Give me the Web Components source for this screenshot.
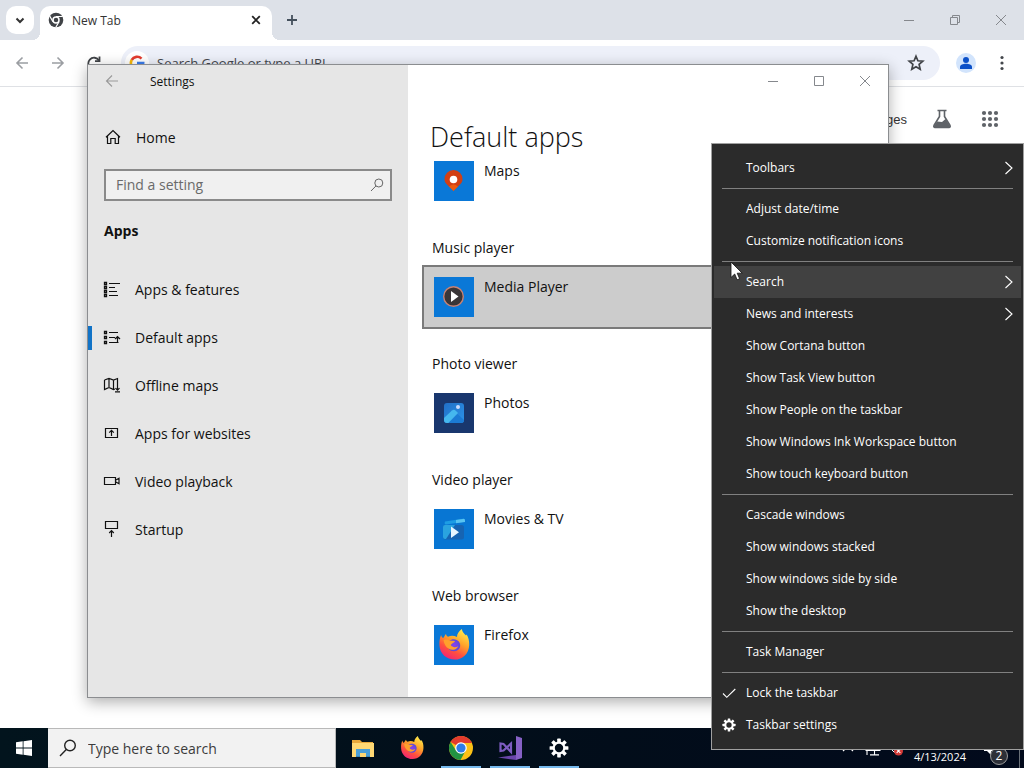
<!DOCTYPE html>
<html lang="en">
<head>
<meta charset="utf-8">
<title>Desktop</title>
<style>
html, body { margin: 0; height: 100%; }
body { font-family: "Open Sans", "Noto Sans", sans-serif; font-size: 14px; color: #111; overflow: hidden; }
</style>
</head>
<body>
<desk-top>
  <browser-window slot="window"></browser-window>
  <settings-window slot="floating" heading="Default apps">
    <settings-link slot="nav" icon="features" label="Apps &amp; features"></settings-link>
    <settings-link slot="nav" icon="defaults" label="Default apps" current></settings-link>
    <settings-link slot="nav" icon="maps" label="Offline maps"></settings-link>
    <settings-link slot="nav" icon="websites" label="Apps for websites"></settings-link>
    <settings-link slot="nav" icon="video" label="Video playback"></settings-link>
    <settings-link slot="nav" icon="startup" label="Startup"></settings-link>
    <default-app icon="tileMaps" name="Maps"></default-app>
    <default-app icon="tileMedia" name="Media Player" kind="Music player" active></default-app>
    <default-app icon="tilePhotos" name="Photos" kind="Photo viewer"></default-app>
    <default-app icon="tileMovies" name="Movies &amp; TV" kind="Video player"></default-app>
    <default-app icon="tileFirefox" name="Firefox" kind="Web browser"></default-app>
  </settings-window>
  <task-bar slot="bar"></task-bar>
  <context-menu slot="floating">
    <menu-item submenu>Toolbars</menu-item>
    <menu-line></menu-line>
    <menu-item>Adjust date/time</menu-item>
    <menu-item>Customize notification icons</menu-item>
    <menu-line></menu-line>
    <menu-item submenu active>Search</menu-item>
    <menu-item submenu>News and interests</menu-item>
    <menu-item>Show Cortana button</menu-item>
    <menu-item>Show Task View button</menu-item>
    <menu-item>Show People on the taskbar</menu-item>
    <menu-item>Show Windows Ink Workspace button</menu-item>
    <menu-item>Show touch keyboard button</menu-item>
    <menu-line></menu-line>
    <menu-item>Cascade windows</menu-item>
    <menu-item>Show windows stacked</menu-item>
    <menu-item>Show windows side by side</menu-item>
    <menu-item>Show the desktop</menu-item>
    <menu-line></menu-line>
    <menu-item>Task Manager</menu-item>
    <menu-line></menu-line>
    <menu-item icon="check">Lock the taskbar</menu-item>
    <menu-item icon="gearSmall">Taskbar settings</menu-item>
  </context-menu>
  <mouse-pointer slot="floating"></mouse-pointer>
</desk-top>

<script>
const S = 'fill="none" stroke="currentColor"';
const gear = (r) => {
  let teeth = '';
  for (let a = 0; a < 360; a += 45) teeth += `<rect x="8.2" y="0.6" width="3.6" height="4.4" rx=".6" transform="rotate(${a} 10 10)"/>`;
  return `<g fill="currentColor">${teeth}</g><circle cx="10" cy="10" r="5.3" fill="none" stroke="currentColor" stroke-width="${r}"/>`;
};
const firefox = (id) => `<defs>
  <linearGradient id="${id}a" x1=".8" y1="0" x2=".25" y2="1"><stop offset="0" stop-color="#fff04d"/><stop offset=".4" stop-color="#ffa329"/><stop offset=".7" stop-color="#ff4f3f"/><stop offset="1" stop-color="#f0207a"/></linearGradient>
  <radialGradient id="${id}b"><stop offset="0" stop-color="#8a3ff0"/><stop offset="1" stop-color="#5b4bd6"/></radialGradient></defs>
  <path fill="url(#${id}a)" d="M2.500 5c.4 1.500 1 2 1.600 2.500C5 6.500 5.500 5 6.500 4c.2 1 .8 1.800 1.700 2.300 2.500-1.300 5-.9 7.300.2C15.500 4 17 1.800 19.500 0c.3 2.400 1.600 3.400 3.400 5.400l.5-1c1.500 2.500 2.200 5 2.100 8.600C25.300 20 20.200 25 13.700 25 7 25 1.600 20.300 1.200 13.500 1 10 1.500 7.500 2.500 5z" transform="scale(.92)"/>
  <path fill="url(#${id}b)" d="M8.500 9c2-2 5.500-1.800 7.300.5 2 2.900.6 7-3.800 7.200-3.500 0-5-2.700-4-4.900z"/>
  <path fill="#ffa02c" d="M4.200 8.200c2-.7 3.600-.3 4.400.5l4.200.3c-.4 1.600-2.600 1.600-3.200 3 1.200 1.600 3 2.300 5.600.9-1 2.400-4.600 3.700-7 2C5.500 13.300 4.600 11 4.200 8.200z"/>`;
const ICONS = {
  chevDown: [10, 10, `<path ${S} stroke-width="2" d="M1.500 3.500 5 7l3.500-3.500"/>`],
  chromeGrey: [16, 16, `<circle cx="8" cy="8" r="7.300" fill="#404347"/><circle cx="8" cy="8" r="3" fill="#404347" stroke="#fff" stroke-width="1.500"/><path stroke="#fff" stroke-width="1.200" d="M8 4.500h6.800M5 9.800 1.600 3.900M11 9.800 7.700 15.500"/>`],
  close: [10, 10, `<path ${S} stroke-width="1.800" d="m1.200 1.200 7.600 7.600m0-7.600L1.200 8.800"/>`],
  plus: [12, 12, `<path ${S} stroke-width="1.800" d="M6 1v10M1 6h10"/>`],
  winMin: [12, 12, `<path ${S} d="M1 6.500h10"/>`],
  winMax: [12, 12, `<path ${S} d="M1.500 1.500h9v9h-9z"/>`],
  winRestore: [12, 12, `<path ${S} d="M1.500 3.500h7v7h-7zM3.500 3.500v-2h7v7h-2"/>`],
  winClose: [12, 12, `<path ${S} d="m1 1 10 10M11 1 1 11"/>`],
  back: [14, 14, `<path ${S} stroke-width="1.600" d="M13 7H2m5.500-5.500L2 7l5.500 5.500"/>`],
  forward: [14, 14, `<path ${S} stroke-width="1.600" d="M1 7h11M6.500 1.500 12 7l-5.500 5.500"/>`],
  reload: [14, 14, `<path ${S} stroke-width="1.800" d="M12 4.600A5.700 5.700 0 1 0 12.700 8"/><path ${S} stroke-width="1.800" d="M12.500.5v4.700H8"/>`],
  google: [16, 16, `<g fill="none" stroke-width="2.600"><path stroke="#e33b2e" d="M2.700 5A6.200 6.200 0 0 1 12.500 3.600"/><path stroke="#f8b908" d="M2.700 5a6.200 6.200 0 0 0 0 6"/><path stroke="#33a150" d="M2.700 11a6.200 6.200 0 0 0 9.500 1.600"/><path stroke="#3b7ded" d="M12.200 12.600A6 6 0 0 0 14.200 8H8"/></g>`],
  star: [18, 18, `<path ${S} stroke-width="1.700" stroke-linejoin="miter" d="m9 2.200 1.900 4.600 4.900.4-3.700 3.200 1.100 4.800L9 12.700l-4.200 2.500 1.100-4.800-3.700-3.200 4.900-.4z"/>`],
  avatar: [20, 20, `<circle cx="10" cy="10" r="10" fill="#d2e4fc"/><circle cx="10" cy="7" r="3" fill="#0b50c8"/><path fill="#0b50c8" d="M4 16v-2c0-2 3-3.200 6-3.200s6 1.200 6 3.200v2z"/>`],
  dots: [4, 16, `<g fill="#44474c"><circle cx="2" cy="2.500" r="1.600"/><circle cx="2" cy="8" r="1.600"/><circle cx="2" cy="13.500" r="1.600"/></g>`],
  flask: [20, 20, `<path fill="none" stroke="#5f6368" stroke-width="1.600" d="M5.500 1.500h9M7.500 1.500v6L2 16.500c-.5 1 0 1.900 1 1.900h14c1 0 1.500-.9 1-1.900l-5.500-9v-6"/><path fill="#5f6368" d="M5 12.500 10 13l3.500-3 4.700 7.200-1 1.500H2.500l-.8-1.200z"/>`],
  grid: [18, 18, `<g fill="#5f6368">${[3, 9, 15].map(y => [3, 9, 15].map(x => `<circle cx="${x}" cy="${y}" r="2.100"/>`).join('')).join('')}</g>`],
  backThin: [14, 14, `<path ${S} stroke-width="1.100" d="M13 7H1.500M7 1.500 1.500 7 7 12.500"/>`],
  home: [16, 16, `<path ${S} stroke-width="1.200" d="M1 8.300 8 1.500l7 6.800M2.500 7v7.500h3.300V9.500h4.400v5h3.300V7"/>`],
  find: [14, 14, `<circle ${S} cx="8.800" cy="5" r="4"/><path ${S} d="M6 7.900 1 13"/>`],
  features: [18, 18, `<path ${S} stroke-width="1.200" d="M6 3.500h11M6 7.500h6M6 11.500h8M6 15.500h9"/><g ${S} stroke-width="1.300"><path d="M1.500 2.500h2v2h-2zM1.500 6.500h2v2h-2zM1.500 10.500h2v2h-2zM1.500 14.500h2v2h-2z"/></g>`],
  defaults: [18, 18, `<path ${S} stroke-width="1.200" d="M6 4.500h9M6 9.500h6M6 14.500h9.500M14.500 15V8.500M12 11l2.500-2.500L17 11"/><g ${S} stroke-width="1.300"><path d="M1.500 3.500h2v2h-2zM1.500 8.500h2v2h-2zM1.500 13.500h2v2h-2z"/></g>`],
  maps: [18, 18, `<path ${S} stroke-width="1.200" d="M1.500 4v9.500l4.500-2 4.500 2L12 13M1.500 4 6 2.500 10.500 4l4-1.500v6M6 2.500v9M10.500 4v9.500M14.500 8.500v5.700M12.500 12.200l2 2 2-2M12 15.800h5"/>`],
  websites: [18, 18, `<path ${S} stroke-width="1.200" d="M2.500 4.500h12v9h-12zM8.500 12V6.500M6.200 8.700l2.300-2.300 2.300 2.300"/>`],
  video: [18, 18, `<path ${S} stroke-width="1.200" d="M1.500 5.500h11v7h-11zM12.500 8.200l3.500-2v5.600l-3.500-2"/>`],
  startup: [18, 18, `<path ${S} stroke-width="1.200" d="M2.500 1.500h12v7h-12zM8.500 17v-6.200M6.200 13l2.300-2.300 2.300 2.300"/>`],
  tileMaps: [40, 40, `<path fill="#0a78d7" d="M0 0h40v40H0z"/><path fill="#d23f13" d="M19.500 9a9 9 0 0 1 9 9.300c0 4.700-5 7-9 11.700-4-4.700-9-7-9-11.700A9 9 0 0 1 19.500 9z"/><path fill="#ec5a10" d="M15 25.500q4.500-4 9 0L19.500 30z"/><circle cx="19.500" cy="18.500" r="3.800" fill="#fff"/>`],
  tileMedia: [40, 40, `<path fill="#0a78d7" d="M0 0h40v40H0z"/><circle cx="19.500" cy="19.500" r="9.800" fill="#393537" stroke="#c88374" stroke-width="1.400"/><path fill="#fff" d="m17 14 7.500 5.500L17 25z"/>`],
  tilePhotos: [40, 40, `<defs><linearGradient id="p" x2="1" y2="1"><stop offset="0" stop-color="#2170c7"/><stop offset="1" stop-color="#2c92e8"/></linearGradient></defs><path fill="#19376e" d="M0 0h40v40H0z"/><rect x="10" y="10" width="20" height="20" rx="3" fill="url(#p)"/><path fill="#45b7ee" d="m10 25 8-7.500q2-1.500 4 .5l2 2-9.500 10H13q-3 0-3-3z"/><path fill="#1b7ad4" d="m14.500 30 9-9 6.500 6q0 3-3 3z"/><circle cx="24" cy="14" r="2" fill="#cbdcff"/>`],
  tileMovies: [40, 40, `<path fill="#0876d3" d="M0 0h40v40H0z"/><path fill="#1d9de4" d="M11 12.500 29 9.800q2-.3 2 1.500v1.500L12 15.500q-2 0-1-3z"/><path fill="#58c4f1" d="m22 11 7-1.100q2-.3 2 1.500v1.500l-9 1.300z"/><rect x="9" y="16" width="21" height="14.500" rx="2.500" fill="#1664b2"/><path fill="#2aa3df" d="M9 18q0-2 2-2h10l-9 14h-1q-2 0-2-2z"/><path fill="#e8f6ff" d="m17 17.500 8 5.800-8 5.700z"/>`],
  tileFirefox: [40, 40, `<path fill="#0a78d7" d="M0 0h40v40H0z"/><g transform="translate(4 4) scale(1.330)">${firefox('t')}</g>`],
  submenu: [10, 14, `<path ${S} stroke-width="1.100" d="M1.500 1 8 7l-6.500 6"/>`],
  check: [14, 14, `<path ${S} stroke-width="1.100" d="m1 7.500 3.800 3.800L13.300 3"/>`],
  gearSmall: [14, 14, `<g transform="scale(.7)">${gear(3)}</g>`],
  start: [16, 16, `<path fill="#fff" d="M0 2.200 6.700 1.300v6.300H0zM7.500 1.200 16 0v7.600H7.500zM0 8.400h6.700v6.300L0 13.800zM7.500 8.400H16V16l-8.500-1.200z"/>`],
  findBig: [18, 18, `<circle ${S} stroke-width="1.400" cx="11" cy="6.500" r="5.300"/><path ${S} stroke-width="1.400" d="M7.300 10.500 1 17"/>`],
  folder: [24, 24, `<path fill="#e9a93c" d="M1 4h8l2 2h11v4H1z"/><path fill="#ffd874" d="M1 7h22v14H1z"/><path fill="#4a9fd8" d="M5 13h14v8h-4v-4H9v4H5z"/><path fill="#3885b9" d="M5 20h4v1H5zM15 20h4v1h-4z"/>`],
  firefox: [24, 24, firefox('f')],
  chrome: [24, 24, `<circle cx="12" cy="12" r="12" fill="#fbc116"/><path fill="#e33b2e" d="M12 12 1.600 6A12 12 0 0 1 22.400 6L23 7H12z"/><path fill="#229342" d="M1.600 6A12 12 0 0 0 11.500 24l5-9.300L12 12 7 14.500z"/><circle cx="12" cy="12" r="5.800" fill="#fff"/><circle cx="12" cy="12" r="4.600" fill="#2f7de9"/>`],
  studio: [24, 24, `<path fill="#8661c5" d="M18 0 24 2v20l-6 2z"/><path fill="#6a46ab" d="M0 21.500 18 19v5z"/><path fill="none" stroke="#7d5cc0" stroke-width="2.200" d="M2.500 7.500v7.500l3-.5 7.500-7v8.500L5.500 8z"/>`],
  gear: [20, 20, gear(2.2)],
  trayUp: [12, 8, `<path ${S} stroke-width="1.200" d="m1 7 5-5 5 5"/>`],
  network: [16, 16, `<path ${S} stroke-width="1.100" d="M4.500 2h10.500v8.500H4.500zM9.500 10.500v4M5 14.900h9M2 6v9M.5 10.500h4"/>`],
  volume: [18, 18, `<path ${S} d="M1.500 6.500h3l4-4v11l-4-4h-3z"/><circle cx="12.500" cy="12" r="4.500" fill="#d23a37"/><path stroke="#fff" stroke-width="1.100" d="m10.700 10.200 3.600 3.600m0-3.600-3.600 3.600"/>`],
  action: [20, 18, `<path fill="#fff" d="M1 1h15v11H8v4l-4-4H1z"/>`],
  pointer: [13, 20, `<path fill="#fff" stroke="#111" stroke-width=".8" d="M1 1v15.500l3.700-3.500 2.400 5.800 2.500-1.100-2.400-5.500h5z"/>`]
};

function define(tag, css, html) {
  customElements.define(tag, class extends HTMLElement {
    connectedCallback() {
      if (this.shadowRoot) return;
      const root = this.attachShadow({ mode: 'open' });
      const t = document.createElement('template');
      t.innerHTML = `<style>*{box-sizing:border-box}button,input{font:inherit;color:inherit;border:0;background:none;padding:0;margin:0;outline:0}a{color:inherit;text-decoration:none}${css}</style>` +
        (typeof html === 'function' ? html(this) : html);
      root.append(t.content.cloneNode(true));
    }
  });
}
const esc = (s) => (s || '').replace(/&/g, '&amp;');

define('ui-icon', ':host{display:inline-flex;flex:none}svg{display:block}', (el) => {
  const [w, h, body] = ICONS[el.getAttribute('name')];
  return `<svg width="${w}" height="${h}" viewBox="0 0 ${w} ${h}" aria-hidden="true">${body}</svg>`;
});

define('desk-top', `
  :host{display:grid;grid-template-rows:1fr 40px;height:100vh;position:relative;overflow:hidden;background:#fff}`,
  '<slot name="window"></slot><slot name="bar"></slot><slot name="floating"></slot>');

define('window-controls', `
  :host{display:flex;color:#85888d}
  button{width:46px;height:32px;display:grid;place-items:center}`,
  (el) => `<button aria-label="Minimize"><ui-icon name="winMin"></ui-icon></button>
  <button aria-label="Resize"><ui-icon name="${el.hasAttribute('maximized') ? 'winRestore' : 'winMax'}"></ui-icon></button>
  <button aria-label="Close"><ui-icon name="winClose"></ui-icon></button>`);

define('browser-window', `
  :host{display:flex;flex-direction:column;min-height:0;background:#fff;font-size:12px;color:#333}
  .tabs{display:flex;height:40px;background:#dde1e8;padding-left:6px}
  .list{width:28px;height:28px;margin-top:6px;border-radius:10px;background:#fff;display:grid;place-items:center}
  .tab{width:232px;margin:6px 0 0 6px;padding:0 10px 6px 8px;background:#fff;border-radius:10px 10px 0 0;display:flex;align-items:center;gap:8px;position:relative}
  .tab::before,.tab::after{content:"";position:absolute;bottom:0;width:8px;height:8px}
  .tab::before{left:-8px;background:radial-gradient(circle at 0 0,transparent 8px,#fff 8px)}
  .tab::after{right:-8px;background:radial-gradient(circle at 100% 0,transparent 8px,#fff 8px)}
  .tab span{flex:1}
  .tab button{width:12px;height:20px;display:grid;place-items:center;color:#222}
  .new{width:40px;height:40px;display:grid;place-items:center;color:#44505c}
  window-controls{margin:4px 0 0 auto}
  .tools{display:flex;align-items:center;height:47px;border-bottom:1px solid #dfe1e5;padding:0 8px 0 4px;color:#9b9ea2}
  .tools>button{width:36px;height:36px;display:grid;place-items:center}
  .tools .reload{color:#404347}
  .omni{flex:1;display:flex;align-items:center;gap:12px;height:34px;border-radius:17px;background:#edf0f9;margin:0 12px 0 9px;padding:0 15px 0 3px;color:#404347}
  .omni .g{width:24px;height:24px;border-radius:50%;background:#fff;display:grid;place-items:center;margin-left:1px;flex:none}
  .omni input{flex:1;min-width:0;height:24px;font-size:13px;margin-left:-4px}
  input::placeholder{color:#44474c;opacity:1}
  .tools .more{width:28px;margin-left:8px}.tools .me{width:28px}
  .page{display:flex;justify-content:flex-end;align-items:center;height:64px;padding-right:25px;font:13px "Liberation Sans",sans-serif}
  .page ui-icon{margin-left:25px}.page ui-icon:last-child{margin-left:29px}`,
  `<div class="tabs"><button class="list" aria-label="Search tabs"><ui-icon name="chevDown"></ui-icon></button>
    <div class="tab"><ui-icon name="chromeGrey"></ui-icon><span>New Tab</span><button aria-label="Close tab"><ui-icon name="close"></ui-icon></button></div>
    <button class="new" aria-label="New tab"><ui-icon name="plus"></ui-icon></button><window-controls maximized></window-controls></div>
  <div class="tools"><button aria-label="Back"><ui-icon name="back"></ui-icon></button><button aria-label="Forward"><ui-icon name="forward"></ui-icon></button><button class="reload" aria-label="Reload"><ui-icon name="reload"></ui-icon></button>
    <div class="omni"><span class="g"><ui-icon name="google"></ui-icon></span><input aria-label="Address" placeholder="Search Google or type a URL"><ui-icon name="star"></ui-icon></div>
    <button class="me" aria-label="Profile"><ui-icon name="avatar"></ui-icon></button><button class="more" aria-label="Menu"><ui-icon name="dots"></ui-icon></button></div>
  <div class="page"><a href="#">Images</a><ui-icon name="flask"></ui-icon><ui-icon name="grid"></ui-icon></div>`);

define('settings-window', `
  :host{position:absolute;inset:64px 135px 70px 87px;display:flex;border:1px solid #8b8d90;background:#fff;box-shadow:0 4px 14px rgba(0,0,0,.32)}
  .side{flex:0 0 40%;background:#e6e6e6;display:flex;flex-direction:column}
  .bar{display:flex;align-items:center;height:32px;padding-left:17px;font-size:12px}
  .bar button{width:14px;height:32px;display:grid;place-items:center;color:#999;margin-right:31px}
  .home{display:flex;align-items:center;gap:15px;height:48px;margin-top:17px;padding:0 0 2px 17px}
  label{display:flex;align-items:center;height:32px;margin:7px 16px 0;border:2px solid #8a8a8a;background:#f0f0f0;padding:0 6px 0 10px;color:#666}
  input{flex:1;min-width:0;height:24px;padding-bottom:2px}
  input::placeholder{color:#6a6a6a;opacity:1}
  h2{margin:20px 16px 25px;font-size:14px;line-height:20px;font-weight:700}
  .main{flex:1;min-width:0;overflow:hidden}
  .main window-controls{justify-content:flex-end}
  h1{margin:0;padding:28px 0 0 22px;font-size:27px;line-height:24px;font-weight:300;color:#111}`,
  (el) => `<nav class="side"><div class="bar"><button aria-label="Back"><ui-icon name="backThin"></ui-icon></button><span>Settings</span></div>
    <a class="home" href="#"><ui-icon name="home"></ui-icon>Home</a>
    <label><input aria-label="Find a setting" placeholder="Find a setting"><ui-icon name="find"></ui-icon></label>
    <h2>Apps</h2><slot name="nav"></slot></nav>
  <section class="main"><window-controls></window-controls><h1>${el.getAttribute('heading')}</h1><slot></slot></section>`);

define('settings-link', `
  :host{display:block}
  a{display:flex;align-items:center;gap:14px;height:48px;padding:0 0 2px 11px;border-left:4px solid transparent;
    border-image:linear-gradient(transparent 12px,var(--mark,transparent) 12px,var(--mark,transparent) 36px,transparent 36px) 0 0 0 4}
  :host([current]){--mark:#1173c7}`,
  (el) => `<a href="#"><ui-icon name="${el.getAttribute('icon')}"></ui-icon>${esc(el.getAttribute('label'))}</a>`);

define('default-app', `
  :host{display:block;padding:0 24px 0 14px;line-height:20px}
  h3{margin:0;padding:25px 0 7px 10px;font-size:14px;font-weight:400}
  button{display:flex;gap:10px;width:100%;height:64px;padding:10px;border:2px solid transparent;text-align:left}
  :host([active]) button{background:#ccc;border-color:#7a7a7a}`,
  (el) => (el.hasAttribute('kind') ? `<h3>${el.getAttribute('kind')}</h3>` : '') +
    `<button><ui-icon name="${el.getAttribute('icon')}"></ui-icon><span>${esc(el.getAttribute('name'))}</span></button>`);

define('context-menu', `
  :host{position:absolute;right:0;bottom:18px;width:313px;box-sizing:border-box;padding:8px 2px;border:1px solid #a0a0a0;background:#2b2b2b;color:#fff;font-size:12px;font-weight:500}`,
  '<div role="menu"><slot></slot></div>');
define('menu-item', `
  :host{display:block}
  button{display:flex;align-items:center;width:100%;height:32px;padding:0 7px 0 8px;text-align:left}
  .lead{width:24px;display:flex}
  .text{flex:1;padding-bottom:2px}
  :host([active]) button{background:#414141}`,
  (el) => `<button role="menuitem"><span class="lead">${el.hasAttribute('icon') ? `<ui-icon name="${el.getAttribute('icon')}"></ui-icon>` : ''}</span><span class="text"><slot></slot></span>${el.hasAttribute('submenu') ? '<ui-icon name="submenu"></ui-icon>' : ''}</button>`);
define('menu-line', ':host{display:block;height:1px;margin:4px 8px;background:#808080}', '');

define('task-bar', `
  :host{display:flex;background:linear-gradient(90deg,#02141d,#020d1a 60%,#020a1c);color:#fff}
  button{display:grid;place-items:center}
  .start{width:48px}
  label{display:flex;align-items:center;gap:11px;flex:0 1 288px;padding-left:11px;background:#f2f2f2;border:1px solid #b9b9b9;border-left:0;color:#222}
  input{flex:1;min-width:0;height:28px}
  input::placeholder{color:#3c3c3c;opacity:1}
  .apps{display:flex;gap:1px;margin-left:3px}
  .apps button{width:48px}
  .apps .open{background:linear-gradient(#76b9ed,#76b9ed) bottom/40px 2px no-repeat}
  .tray{display:flex;align-items:center;margin-left:auto;padding-right:4px;gap:5px}
  .tray ui-icon[name=network]{margin-left:6px}
  time{align-self:flex-end;font-size:11px;line-height:16px;padding:0 12px 3px 5px}
  .note{position:relative;display:flex;border:0}
  .note b{position:absolute;left:7px;top:8px;width:18px;height:18px;border-radius:50%;border:1px solid #999;background:#2d3038;font-size:12px;line-height:16px;text-align:center;font-weight:400}
  .edge{align-self:stretch;border-left:1px solid #6a7078;margin-left:11px}`,
  `<button class="start" aria-label="Start"><ui-icon name="start"></ui-icon></button>
  <label><ui-icon name="findBig"></ui-icon><input aria-label="Search" placeholder="Type here to search"></label>
  <div class="apps"><button aria-label="File Explorer"><ui-icon name="folder"></ui-icon></button><button aria-label="Firefox"><ui-icon name="firefox"></ui-icon></button><button class="open" aria-label="Chrome"><ui-icon name="chrome"></ui-icon></button><button class="open" aria-label="Visual Studio"><ui-icon name="studio"></ui-icon></button><button class="open" aria-label="Settings"><ui-icon name="gear"></ui-icon></button></div>
  <div class="tray"><ui-icon name="trayUp"></ui-icon><ui-icon name="network"></ui-icon><ui-icon name="volume"></ui-icon><time>4/13/2024</time><button class="note" aria-label="Notifications"><ui-icon name="action"></ui-icon><b>2</b></button><span class="edge"></span></div>`);

define('mouse-pointer', ':host{position:absolute;left:730px;top:261px;pointer-events:none}', '<ui-icon name="pointer"></ui-icon>');
</script>
</body>
</html>
